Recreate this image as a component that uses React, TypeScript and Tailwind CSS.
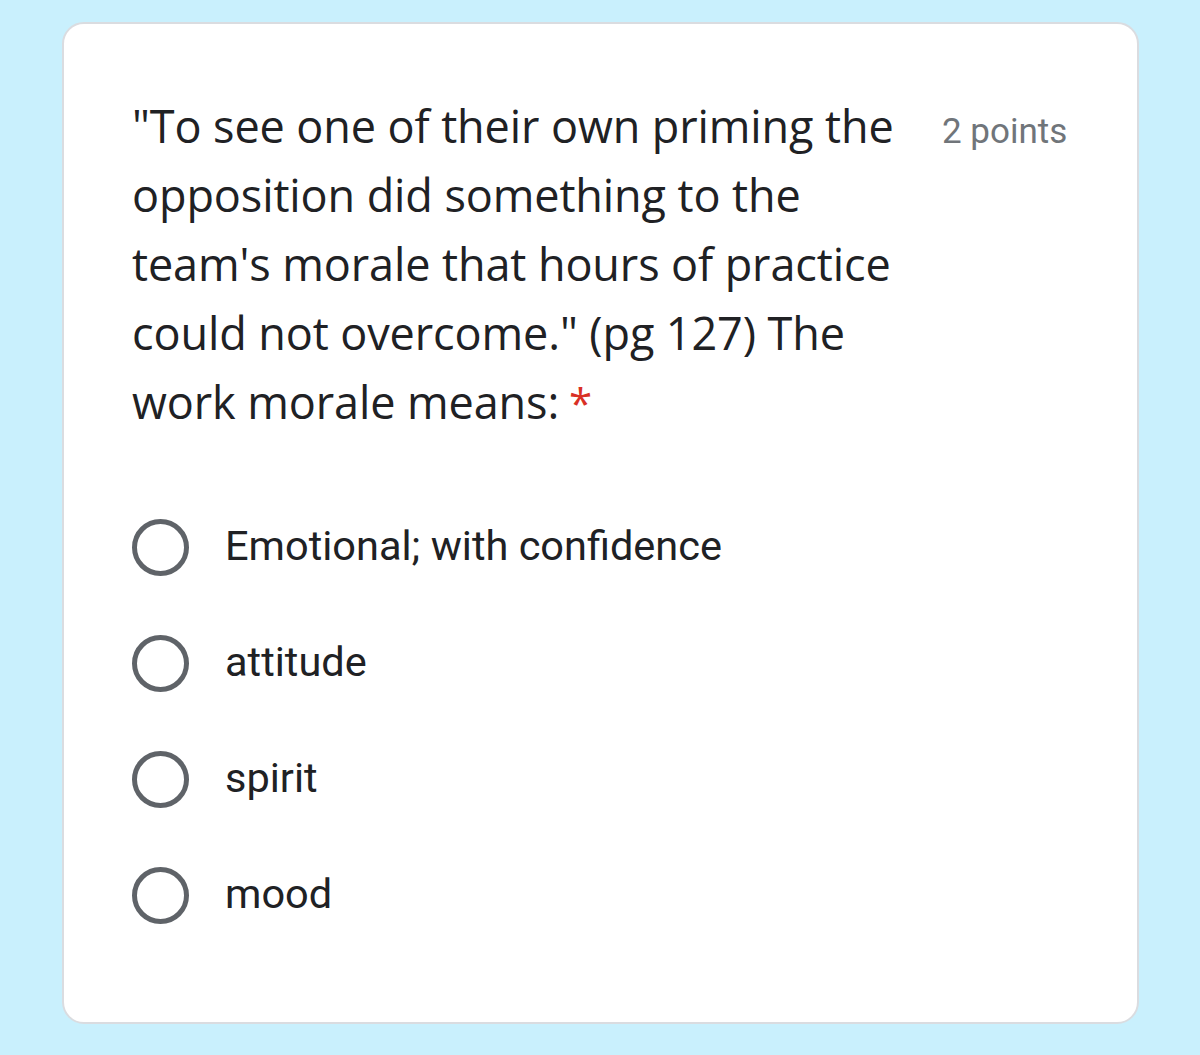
const lines = [
  "\"To see one of their own priming the",
  "opposition did something to the",
  "team's morale that hours of practice",
  "could not overcome.\" (pg 127) The",
];

const options = ["Emotional; with confidence", "attitude", "spirit", "mood"];

function Radio() {
  return (
    <span className="block w-[57px] h-[57px] shrink-0 rounded-full border-[5px] border-[#5f6368]" />
  );
}

export default function App() {
  return (
    <div className="min-h-[1055px] w-[1200px] bg-[#c9f0fd] pt-[22px] pl-[62px]">
      <div className="w-[1077px] h-[1002px] rounded-[22px] border-2 border-[#dadce0] bg-white pl-[68px] pt-[67px]">
        {/* Question header */}
        <div className="flex items-baseline">
          <div className="w-[810px] font-['Open_Sans',sans-serif] text-[45px] leading-[69px] text-[#202124] tracking-[-0.1px]">
            {lines.map((l) => (
              <div key={l} className="whitespace-nowrap">{l}</div>
            ))}
            <div className="whitespace-nowrap">
              work morale means:
              <span className="ml-[10px] text-[42px] text-[#d93025]">*</span>
            </div>
          </div>
          <div className="font-['Roboto',sans-serif] text-[35px] leading-[40px] text-[#70757a]">
            2 points
          </div>
        </div>

        {/* Options */}
        <div className="mt-[82px] flex flex-col gap-[59px]">
          {options.map((o) => (
            <div key={o} className="flex items-center h-[57px]">
              <Radio />
              <span className="ml-[36px] -mt-[4px] font-['Roboto',sans-serif] text-[41.5px] leading-[57px] text-[#202124]">
                {o}
              </span>
            </div>
          ))}
        </div>
      </div>
    </div>
  );
}
